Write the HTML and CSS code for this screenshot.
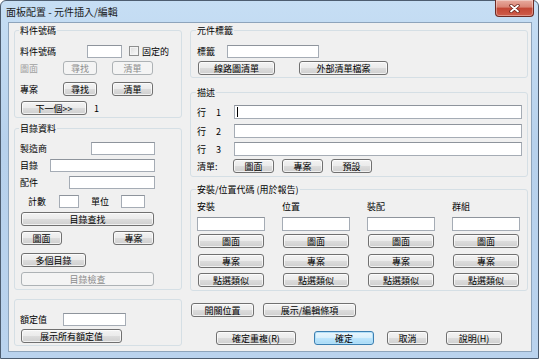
FILE: index.html
```html
<!DOCTYPE html>
<html lang="zh-TW">
<head>
    <meta charset="UTF-8">
    <title>面板配置 - 元件插入/編輯</title>
    <link rel="stylesheet" href="styles.css">
</head>
<body>
    <div class="window">
        <div class="titlebar">
            <span class="title">面板配置 - 元件插入/編輯</span>
            <button class="close-btn" aria-label="關閉">
                <svg width="11" height="9" viewBox="0 0 11 9">
                    <path d="M2 1.5 L9 7.5 M9 1.5 L2 7.5" stroke="#6b2219" stroke-width="3.4" stroke-linecap="round"/>
                    <path d="M2 1.5 L9 7.5 M9 1.5 L2 7.5" stroke="#fff" stroke-width="1.8" stroke-linecap="round"/>
                </svg>
            </button>
        </div>

        <div class="client">
            <!-- 左欄 -->
            <div class="col">
                <fieldset class="group grp-part">
                    <legend>料件號碼</legend>
                    <div class="row">
                        <label class="lbl part-lbl">料件號碼</label>
                        <input class="field part-no">
                        <label class="check-label"><span class="check"></span>固定的</label>
                    </div>
                    <div class="row mt3 off">
                        <span class="lbl find-lbl">圖面</span>
                        <button class="btn find" disabled>尋找</button>
                        <button class="btn list" disabled>清單</button>
                    </div>
                    <div class="row mt7">
                        <span class="lbl find-lbl">專案</span>
                        <button class="btn find">尋找</button>
                        <button class="btn list">清單</button>
                    </div>
                    <div class="row mt5">
                        <button class="btn next">下一個&gt;&gt;</button>
                        <span class="count">1</span>
                    </div>
                </fieldset>

                <fieldset class="group grp-catalog">
                    <legend>目錄資料</legend>
                    <div class="row">
                        <label class="lbl maker-lbl">製造商</label>
                        <input class="field maker">
                    </div>
                    <div class="row mt3">
                        <label class="lbl cat-lbl">目錄</label>
                        <input class="field cat">
                    </div>
                    <div class="row mt3">
                        <label class="lbl acc-lbl">配件</label>
                        <input class="field acc">
                    </div>
                    <div class="row mt5">
                        <label class="lbl qty-lbl">計數</label>
                        <input class="field qty">
                        <label class="lbl unit-lbl">單位</label>
                        <input class="field unit">
                    </div>
                    <div class="row mt4">
                        <button class="btn wide">目錄查找</button>
                    </div>
                    <div class="row mt5 split">
                        <button class="btn small">圖面</button>
                        <button class="btn small">專案</button>
                    </div>
                    <div class="row mt8">
                        <button class="btn multi">多個目錄</button>
                    </div>
                    <div class="row mt5">
                        <button class="btn wide" disabled>目錄檢查</button>
                    </div>
                </fieldset>

                <fieldset class="group grp-rating">
                    <div class="row">
                        <label class="lbl rating-lbl">額定值</label>
                        <input class="field rating">
                    </div>
                    <div class="row mt3">
                        <button class="btn show-all">展示所有額定值</button>
                    </div>
                </fieldset>
            </div>

            <!-- 右欄 -->
            <div class="col">
                <fieldset class="group grp-tag">
                    <legend>元件標籤</legend>
                    <div class="row">
                        <label class="lbl tag-lbl">標籤</label>
                        <input class="field tag">
                    </div>
                    <div class="row mt3">
                        <button class="btn schem">線路圖清單</button>
                        <button class="btn extern">外部清單檔案</button>
                    </div>
                </fieldset>

                <fieldset class="group grp-desc">
                    <legend>描述</legend>
                    <div class="row">
                        <span class="line-lbl"><span>行</span><span>1</span></span>
                        <div class="field line focused"><span class="caret"></span></div>
                    </div>
                    <div class="row mt5">
                        <span class="line-lbl"><span>行</span><span>2</span></span>
                        <input class="field line">
                    </div>
                    <div class="row mt4">
                        <span class="line-lbl"><span>行</span><span>3</span></span>
                        <input class="field line">
                    </div>
                    <div class="row mt3 pick-row">
                        <span class="lbl pick-lbl">清單:</span>
                        <button class="btn small">圖面</button>
                        <button class="btn small">專案</button>
                        <button class="btn small">預設</button>
                    </div>
                </fieldset>

                <fieldset class="group grp-codes">
                    <legend>安裝/位置代碼 (用於報告)</legend>
                    <div class="codes">
                        <span class="code-head">安裝</span>
                        <span class="code-head">位置</span>
                        <span class="code-head">裝配</span>
                        <span class="code-head">群組</span>

                        <input class="field code">
                        <input class="field code">
                        <input class="field code">
                        <input class="field code">

                        <button class="btn code-btn">圖面</button>
                        <button class="btn code-btn">圖面</button>
                        <button class="btn code-btn">圖面</button>
                        <button class="btn code-btn">圖面</button>

                        <button class="btn code-btn gap6">專案</button>
                        <button class="btn code-btn gap6">專案</button>
                        <button class="btn code-btn gap6">專案</button>
                        <button class="btn code-btn gap6">專案</button>

                        <button class="btn code-btn gap5">點選類似</button>
                        <button class="btn code-btn gap5">點選類似</button>
                        <button class="btn code-btn gap5">點選類似</button>
                        <button class="btn code-btn gap5">點選類似</button>
                    </div>
                </fieldset>

                <div class="row actions">
                    <button class="btn toggle-pos">開關位置</button>
                    <button class="btn edit-items">展示/編輯條項</button>
                </div>

                <div class="row dialog-btns">
                    <button class="btn repeat">確定重複(R)</button>
                    <button class="btn ok default">確定</button>
                    <button class="btn cancel">取消</button>
                    <button class="btn help">說明(H)</button>
                </div>
            </div>
        </div>
    </div>
</body>
</html>
```

FILE: styles.css
```css
* {
    margin: 0;
    padding: 0;
    box-sizing: border-box;
}

body {
    width: 539px;
    height: 359px;
    overflow: hidden;
    background: #fff;
    color: #000;
    font-family: "Noto Sans CJK TC", "Noto Sans", sans-serif;
    font-size: 9px;
    line-height: 11px;
}

/* 視窗外框 */
.window {
    width: 539px;
    height: 359px;
    display: flex;
    flex-direction: column;
    border: 1px solid #4d5d70;
    border-radius: 6px 6px 0 0;
    background: linear-gradient(#c6def4, #b7d1ec 40%, #bad3ee);
    padding: 0 6px 6px 7px;
}

.titlebar {
    height: 21px;
    display: flex;
    align-items: flex-start;
}

.title {
    margin: 5px 0 0 -2px;
    font-size: 10px;
    line-height: 12px;
    color: #1b1b1b;
}

.close-btn {
    margin: -1px -2px 0 auto;
    width: 39px;
    height: 17px;
    border: 1px solid #6d2b24;
    border-top: none;
    border-radius: 0 0 4px 4px;
    background: linear-gradient(#e8ab9f, #d98474 45%, #c24634 50%, #cf5d4b);
    box-shadow: inset 0 0 0 1px rgba(255, 255, 255, 0.35);
    display: flex;
    align-items: center;
    justify-content: center;
}

/* 用戶區 */
.client {
    flex: 1;
    background: #f0f0f0;
    border: 1px solid #8ea4bb;
    display: grid;
    grid-template-columns: 168px 338px;
    column-gap: 8px;
    align-content: start;
    padding: 2px 0 0 5px;
}

.col {
    display: flex;
    flex-direction: column;
}

.group {
    border: 1px solid #d5dfe5;
    border-radius: 3px;
    padding: 0 5px 2px 5px;
    min-width: 0;
}

.group legend {
    padding: 0 1px;
    margin-left: -1px;
    line-height: 11px;
}

.row {
    display: flex;
    align-items: center;
    height: 14px;
}

.mt3 { margin-top: 3px; }
.mt4 { margin-top: 4px; }
.mt5 { margin-top: 5px; }
.mt7 { margin-top: 7px; }
.mt8 { margin-top: 8px; }

.lbl {
    flex: none;
    white-space: nowrap;
}

.off .lbl {
    color: #a0a0a0;
}

.field {
    flex: none;
    height: 13px;
    border: 1px solid #a5acb5;
    border-top-color: #8e949c;
    background: #fff;
    outline: none;
    font: inherit;
}

/* 按鈕 */
.btn {
    flex: none;
    height: 14px;
    border: 1px solid #707070;
    border-radius: 3px;
    background: linear-gradient(#f3f3f3, #ebebeb 48%, #dcdcdc 52%, #cfcfcf);
    box-shadow: inset 0 0 0 1px rgba(255, 255, 255, 0.7);
    font: inherit;
    line-height: 11px;
    color: #000;
    text-align: center;
    white-space: nowrap;
}

.btn:disabled {
    border-color: #adb2b5;
    background: #f4f4f4;
    box-shadow: none;
    color: #8c8c8c;
}

.btn.default {
    border-color: #3c7fb1;
    background: linear-gradient(#eaf6fd, #d9f0fc 48%, #bee6fd 52%, #a7d9f5);
    box-shadow: inset 0 0 0 1px #b3e0f9;
}

/* 料件號碼 */
.grp-part {
    padding-top: 8px;
}

.part-lbl { width: 67px; }
.part-no { width: 35px; }

.check-label {
    display: flex;
    align-items: center;
    margin-left: 7px;
}

.check {
    width: 10px;
    height: 10px;
    margin-right: 3px;
    border: 1px solid #8e8f8f;
    background: linear-gradient(135deg, #dcdcdc, #fbfbfb);
    box-shadow: inset 0 0 0 1px #f4f4f4;
}

.find-lbl { width: 43px; }
.find { width: 34px; }
.list { width: 41px; margin-left: 15px; }
.next { width: 66px; margin-left: 1px; }
.count { margin-left: 7px; }

/* 目錄資料 */
.grp-catalog {
    margin-top: 5px;
    padding-top: 7px;
    padding-bottom: 3px;
}

.maker-lbl { width: 71px; }
.maker { width: 64px; }
.cat-lbl { width: 30px; }
.cat { width: 105px; }
.acc-lbl { width: 49px; }
.acc { width: 86px; }
.qty-lbl { width: 31px; margin-left: 8px; }
.qty { width: 20px; }
.unit-lbl { width: 30px; margin-left: 12px; }
.unit { width: 24px; }

.wide { width: 133px; margin-left: 1px; }
.small { width: 41px; }
.split { width: 134px; padding-left: 1px; justify-content: space-between; }
.multi { width: 65px; margin-left: 1px; }

/* 額定值 */
.grp-rating {
    margin-top: 9px;
    padding-top: 12px;
}

.rating-lbl { width: 43px; }
.rating { width: 63px; }
.show-all { width: 101px; margin-left: 1px; }

/* 元件標籤 */
.grp-tag {
    padding: 8px 5px 2px 6px;
}

.tag-lbl { width: 30px; }
.tag { width: 92px; }
.schem { width: 77px; margin-left: 1px; }
.extern { width: 89px; margin-left: 24px; }

/* 描述 */
.grp-desc {
    margin-top: 9px;
    padding: 7px 5px 3px 6px;
}

.line-lbl {
    width: 37px;
    flex: none;
    display: flex;
    gap: 10px;
}

.field.line {
    flex: 1;
    height: 14px;
}

.focused {
    display: flex;
    align-items: center;
    padding-left: 2px;
}

.caret {
    width: 1px;
    height: 10px;
    background: #000;
}

.pick-lbl { width: 36px; }
.pick-row .small + .small { margin-left: 8px; }

/* 安裝/位置代碼 */
.grp-codes {
    margin-top: 7px;
    padding: 5px 5px 3px 6px;
}

.codes {
    display: grid;
    grid-template-columns: repeat(4, 68px);
    column-gap: 17px;
    row-gap: 3px;
    align-items: center;
}

.code-head {
    height: 14px;
    line-height: 14px;
}

.code { width: 68px; height: 14px; }
.code-btn { width: 66px; margin-left: 1px; }
.gap6 { margin-top: 3px; }
.gap5 { margin-top: 2px; }

/* 底部按鈕 */
.actions {
    margin-top: 12px;
}

.toggle-pos { width: 63px; margin-left: 1px; }
.edit-items { width: 93px; margin-left: 9px; }

.dialog-btns {
    margin-top: 14px;
}

.repeat { width: 80px; margin-left: 26px; }
.ok { width: 60px; margin-left: 18px; }
.cancel { width: 41px; margin-left: 13px; }
.help { width: 56px; margin-left: 18px; }
```
